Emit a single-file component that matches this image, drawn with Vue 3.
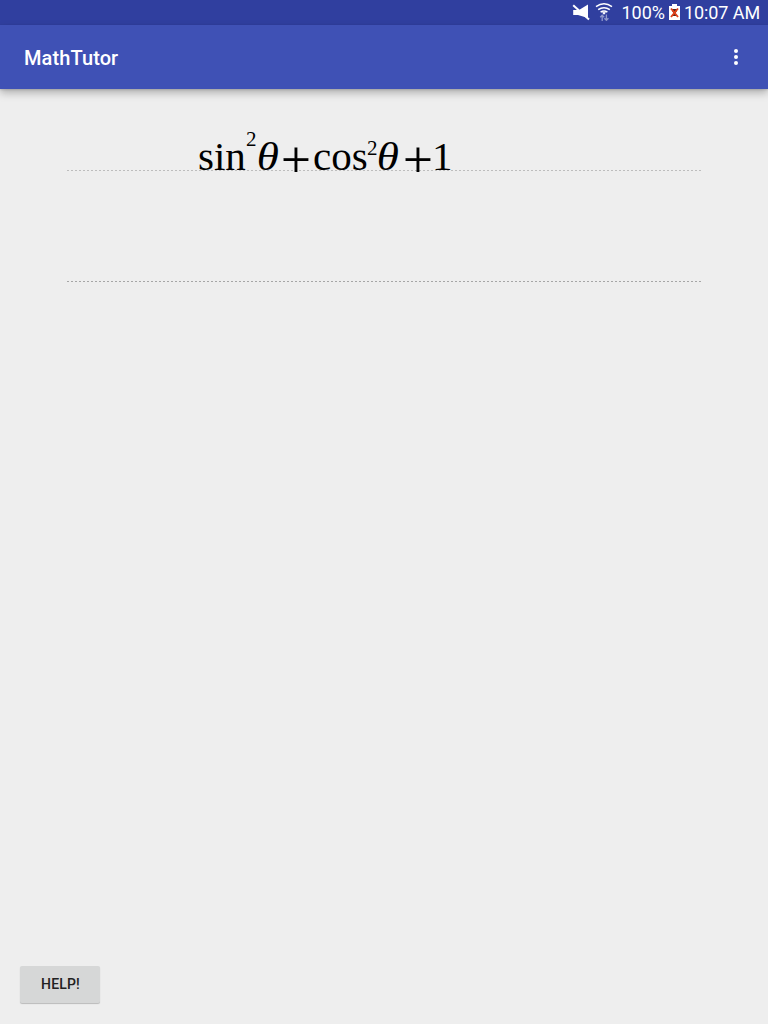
<template>
  <div class="screen">
    <div class="status-bar">
      <svg class="icon-mute" width="18" height="18" viewBox="0 0 18 18">
        <path d="M1.2 7H7L16 1.6V15L6 12H1.2z" fill="#fff" />
        <path d="M1.2 2.2L17 16.4" stroke="#fff" stroke-width="2" />
      </svg>
      <svg class="icon-wifi" width="18" height="18" viewBox="0 0 18 18">
        <g fill="none" stroke="#fff" stroke-width="1.5">
          <path d="M1 3.6Q9 -2 17 3.6" />
          <path d="M3.2 6.7Q9 2.6 14.8 6.7" />
          <path d="M5.6 9.2Q9 6.6 12.4 9.2" />
        </g>
        <path d="M7 9.6Q9 8.4 11 9.6L9 11.8z" fill="#fff" />
        <g fill="none" stroke="#8f98cb" stroke-width="1.3">
          <path d="M7.2 18V12M5.2 14.2L7.2 12.2L9.2 14.2" />
          <path d="M11.4 11.5V17.5M9.4 15.3L11.4 17.3L13.4 15.3" />
        </g>
      </svg>
      <span class="battery-text">100%</span>
      <svg class="icon-battery" width="11" height="16" viewBox="0 0 11 16">
        <path d="M3 0h5v2h3v14H0V2h3z" fill="#fff" />
        <path d="M3 5h5v2L6.5 9 8 12H3l1.5-3L3 7z" fill="#4a2a20" />
        <path d="M2 4.5L9 13M9 4.5L2 13" stroke="#e2401b" stroke-width="1.9" />
      </svg>
      <span class="clock">10:07 AM</span>
    </div>

    <header class="app-bar">
      <h1 class="title">MathTutor</h1>
      <button class="menu" aria-label="More options">
        <i v-for="n in 3" :key="n"></i>
      </button>
    </header>

    <main class="content">
      <div class="row first">
        <div class="formula">
          <span v-for="(token, index) in tokens" :key="index" :class="token.type">{{ token.text }}</span>
        </div>
      </div>
      <div class="row second"></div>
    </main>

    <footer class="footer">
      <button class="help">HELP!</button>
    </footer>
  </div>
</template>

<script setup>
const tokens = [
  { text: 'sin', type: 'fn' },
  { text: '2', type: 'sup raised' },
  { text: 'θ', type: 'var' },
  { text: '+', type: 'op' },
  { text: 'cos', type: 'fn' },
  { text: '2', type: 'sup' },
  { text: 'θ', type: 'var' },
  { text: '+', type: 'op' },
  { text: '1', type: 'num' },
];
</script>

<style>
body {
  margin: 0;
  background: #eeeeee;
}
</style>

<style scoped>
.screen {
  display: flex;
  flex-direction: column;
  height: 1024px;
  overflow: hidden;
  background: #eeeeee;
  font-family: Roboto, "Liberation Sans", sans-serif;
}
.status-bar {
  display: flex;
  flex: none;
  align-items: center;
  justify-content: flex-end;
  box-sizing: border-box;
  height: 25px;
  padding-right: 8px;
  background: #303f9f;
  color: #fff;
  font-size: 18px;
  line-height: 25px;
  white-space: nowrap;
}
.icon-mute {
  margin: 0 5px 1px 0;
}
.icon-wifi {
  margin: 0 9px 1px 0;
}
.icon-battery {
  margin: 0 4px 1px;
}
.clock {
  letter-spacing: -0.1px;
}
.app-bar {
  display: flex;
  flex: none;
  align-items: center;
  justify-content: space-between;
  box-sizing: border-box;
  height: 64px;
  padding: 0 24px;
  background: #3f51b5;
  box-shadow: 0 4px 8px rgba(0, 0, 0, 0.26), 0 1px 2px rgba(0, 0, 0, 0.12);
}
.title {
  margin: 2px 0 0;
  color: #fff;
  font-size: 20px;
  font-weight: 500;
  letter-spacing: 0.1px;
}
.menu {
  display: flex;
  flex-direction: column;
  align-items: center;
  gap: 2px;
  width: 16px;
  padding: 0;
  border: 0;
  background: none;
}
.menu i {
  width: 4px;
  height: 4px;
  border-radius: 50%;
  background: #fff;
}
.content {
  flex: 1;
  padding: 0 67px;
}
.row {
  display: flex;
  align-items: flex-end;
  box-sizing: border-box;
}
.row::after {
  content: "";
  flex: 1;
  height: 1px;
  margin-left: -100%;
  background: repeating-linear-gradient(to right, #bdbdbd 0 2px, transparent 2px 4px);
}
.first {
  height: 82px;
}
.second {
  height: 111px;
}
.second::after {
  margin-left: 0;
  background: repeating-linear-gradient(to right, #a6a6a6 0 2px, transparent 2px 4px);
}
.formula {
  display: flex;
  flex: none;
  align-items: baseline;
  box-sizing: border-box;
  width: 100%;
  height: 46px;
  padding-left: 131px;
  color: #000;
  font-family: "Liberation Serif", serif;
  font-size: 41px;
  line-height: 54px;
}
.fn {
  width: 49px;
}
.fn ~ .fn {
  width: 54px;
}
.sup {
  width: 11px;
  font-size: 21px;
  transform: translateY(-15px);
}
.raised {
  transform: translate(-1px, -24px);
}
.var {
  width: 23px;
  font-style: italic;
  transform: scaleX(1.1);
}
.sup:not(.raised) + .var {
  width: 25px;
}
.op {
  width: 32px;
  font-size: 53px;
  -webkit-text-stroke: 0.15px #000;
  transform: translateY(7px);
}
.num {
  transform: translateX(-3px);
}
.footer {
  flex: none;
  padding: 0 20px 21px;
}
.help {
  display: block;
  width: 80px;
  height: 37px;
  padding: 0 0 1px 1px;
  border: 0;
  border-radius: 2px;
  background: #d6d7d7;
  box-shadow: 0 1px 1px rgba(0, 0, 0, 0.22);
  color: #212121;
  font-family: inherit;
  font-size: 14px;
  font-weight: 500;
  letter-spacing: 0.15px;
}
</style>
